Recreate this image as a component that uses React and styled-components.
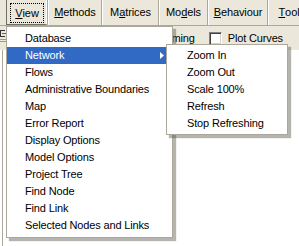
import React from 'react';
import styled, { createGlobalStyle } from 'styled-components';

const GlobalStyle = createGlobalStyle`
  html, body {
    margin: 0;
    padding: 0;
    background: #ffffff;
  }
  body {
    font-family: "Liberation Sans", Arial, sans-serif;
    font-size: 11px;
    color: #000;
  }
`;

const menuBar = [
  { label: 'View', key: 'V', width: 41, pressed: true },
  { label: 'Methods', key: 'M', width: 52 },
  { label: 'Matrices', key: 'a', width: 55 },
  { label: 'Models', key: 'd', width: 47 },
  { label: 'Behaviour', key: 'B', width: 58 },
  { label: 'Tool', key: 'T', width: 40 },
];

const viewItems = [
  'Database',
  'Network',
  'Flows',
  'Administrative Boundaries',
  'Map',
  'Error Report',
  'Display Options',
  'Model Options',
  'Project Tree',
  'Find Node',
  'Find Link',
  'Selected Nodes and Links',
];

const networkItems = ['Zoom In', 'Zoom Out', 'Scale 100%', 'Refresh', 'Stop Refreshing'];

const Mnemonic = ({ text, letter }) => {
  const i = text.indexOf(letter);
  if (i < 0) return text;
  return (
    <>
      {text.slice(0, i)}
      <u>{text[i]}</u>
      {text.slice(i + 1)}
    </>
  );
};

const App = () => {
  return (
    <Page>
      <GlobalStyle />
      <Bar>
        {menuBar.map((m, i) => (
          <React.Fragment key={m.label}>
            {i > 0 && <Separator />}
            <BarItem $width={m.width} $pressed={m.pressed}>
              <Focus $on={m.pressed}>
                <Mnemonic text={m.label} letter={m.key} />
              </Focus>
            </BarItem>
          </React.Fragment>
        ))}
      </Bar>
      <ToolRow>
        <ToolIcon width="7" height="16" viewBox="0 0 7 16">
          <path d="M0 3h5v1H1v5h4v1H0z" fill="#333" />
          <path d="M2 6h4v1H2z" fill="#666" />
          <path d="M0 12h6v1H0zM0 14h6v1H0z" fill="#999" />
        </ToolIcon>
        <ToolLabel>Zooming</ToolLabel>
        <CheckBox />
        <ToolLabel $tight>Plot Curves</ToolLabel>
      </ToolRow>
      <Workspace />

      <Menu $left={6} $top={26} $width={167} $z={2}>
        {viewItems.map((t) => (
          <MenuItem key={t} $active={t === 'Network'} $indent={18}>
            <span>{t}</span>
            {t === 'Network' && (
              <Arrow width="4" height="7" viewBox="0 0 4 7">
                <path d="M0 0l4 3.5L0 7z" fill="#fff" />
              </Arrow>
            )}
          </MenuItem>
        ))}
      </Menu>

      <Menu $left={166} $top={44} $width={122} $z={3} $pad={2}>
        {networkItems.map((t) => (
          <MenuItem key={t} $indent={20}>
            <span>{t}</span>
          </MenuItem>
        ))}
      </Menu>
    </Page>
  );
};

export default App;

const Page = styled.div`
  position: relative;
  width: 299px;
  height: 246px;
  overflow: hidden;
  background: #ffffff;
`;

const Bar = styled.div`
  display: flex;
  align-items: stretch;
  height: 25px;
  padding-left: 6px;
  background: #ebe8db;
  border-bottom: 1px solid #aca899;
`;

const BarItem = styled.div`
  box-sizing: border-box;
  flex: 0 0 ${(p) => p.$width}px;
  display: flex;
  align-items: center;
  justify-content: center;
  padding: ${(p) => (p.$pressed ? '3px 2px 1px 3px' : '2px 2px 2px 2px')};
  border: 1px solid transparent;
  border-color: ${(p) =>
    p.$pressed ? '#716f64 #ffffff #716f64 #716f64' : 'transparent'};
  border-top: none;
  white-space: nowrap;
  letter-spacing: -0.1px;
`;

const Focus = styled.span`
  flex: 1;
  align-self: stretch;
  display: flex;
  align-items: center;
  justify-content: center;
  outline: ${(p) => (p.$on ? '1px dotted #000' : 'none')};
  outline-offset: -1px;
`;

const Separator = styled.div`
  flex: 0 0 0;
  border-left: 1px solid #aca899;
  border-right: 1px solid #ffffff;
`;

const ToolRow = styled.div`
  display: flex;
  align-items: center;
  height: 24px;
  background: #ebe8db;
`;

const ToolIcon = styled.svg`
  flex: 0 0 auto;
  margin-left: 0;
  margin-top: -6px;
`;

const ToolLabel = styled.span`
  margin-left: ${(p) => (p.$tight ? '6px' : '146px')};
  white-space: nowrap;
  letter-spacing: -0.15px;
`;

const CheckBox = styled.span`
  box-sizing: border-box;
  width: 13px;
  height: 13px;
  margin-left: 14px;
  background: #ffffff;
  border-top: 1px solid #808080;
  border-left: 1px solid #808080;
  border-right: 1px solid #ffffff;
  border-bottom: 1px solid #ffffff;
  box-shadow: inset 1px 1px 0 #404040, inset -1px -1px 0 #d4d0c8;
`;

const Workspace = styled.div`
  height: 196px;
  margin-left: 2px;
  border-left: 1px solid #aca899;
  background: #ffffff;
`;

const Menu = styled.div`
  position: absolute;
  left: ${(p) => p.$left}px;
  top: ${(p) => p.$top}px;
  width: ${(p) => p.$width}px;
  box-sizing: border-box;
  z-index: ${(p) => p.$z};
  padding: ${(p) => (p.$pad ?? 3)}px 0;
  background: #ffffff;
  border: 1px solid #aca899;
  box-shadow: 3px 3px 1px rgba(90, 88, 78, 0.45);
`;

const MenuItem = styled.div`
  display: flex;
  align-items: center;
  justify-content: space-between;
  height: 17px;
  line-height: 17px;
  padding-left: ${(p) => p.$indent}px;
  padding-right: 8px;
  white-space: nowrap;
  letter-spacing: -0.15px;
  color: ${(p) => (p.$active ? '#ffffff' : '#000000')};
  background: ${(p) => (p.$active ? '#316ac5' : 'transparent')};
`;

const Arrow = styled.svg`
  flex: 0 0 auto;
`;
